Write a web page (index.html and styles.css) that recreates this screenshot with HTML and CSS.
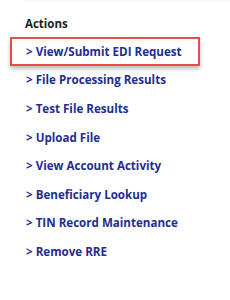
FILE: index.html
```html
<!DOCTYPE html>
<html lang="en">
<head>
  <meta charset="UTF-8">
  <title>Actions</title>
  <link rel="stylesheet" href="styles.css">
</head>
<body>
  <div class="top-rule"></div>
  <div class="actions">
    <h3>Actions</h3>
    <ul class="action-list">
      <li class="active"><a href="#">&gt; View/Submit EDI Request</a></li>
      <li><a href="#">&gt; File Processing Results</a></li>
      <li><a href="#">&gt; Test File Results</a></li>
      <li><a href="#">&gt; Upload File</a></li>
      <li><a href="#">&gt; View Account Activity</a></li>
      <li><a href="#">&gt; Beneficiary Lookup</a></li>
      <li><a href="#">&gt; TIN Record Maintenance</a></li>
      <li><a href="#">&gt; Remove RRE</a></li>
    </ul>
  </div>
</body>
</html>
```

FILE: styles.css
```css
body {
  margin: 0;
  width: 230px;
  height: 300px;
  background: #fff;
  font-family: "Open Sans", Arial, sans-serif;
}

.top-rule {
  height: 2px;
  margin-left: 24px;
  background: #f8f8f8;
}

.actions {
  padding: 13px 0 0 10px;
}

h3 {
  margin: 0 0 4px 15px;
  font-size: 11.5px;
  font-weight: 700;
  color: #222;
  line-height: 18px;
}

.action-list {
  list-style: none;
  margin: 0;
  padding: 0;
}

.action-list li {
  width: 172px;
  height: 24.6px;
  border: 2px solid transparent;
  padding-left: 14px;
  display: flex;
  align-items: center;
}

.action-list li.active {
  border-color: #ec4a4f;
  box-shadow: 0 3px 4px rgba(0, 0, 0, 0.25);
}

.action-list a {
  font-size: 11.6px;
  font-weight: 700;
  color: #1f2d91;
  text-decoration: none;
}
```
